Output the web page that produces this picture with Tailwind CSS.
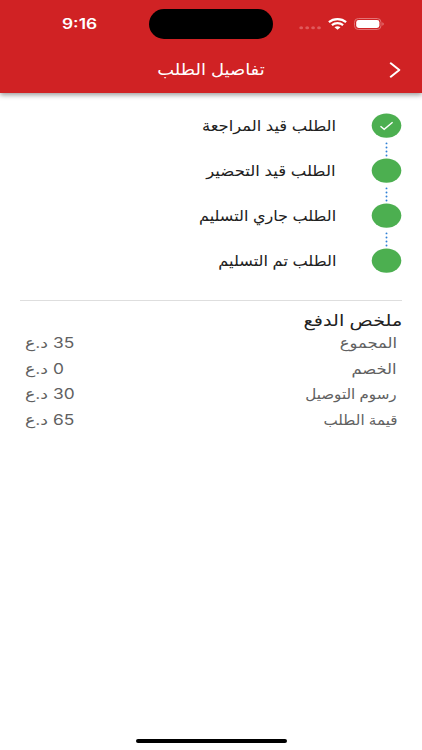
<!DOCTYPE html>
<html lang="ar" dir="rtl">
<head>
  <meta charset="UTF-8">
  <meta name="viewport" content="width=device-width, initial-scale=1.0">
  <title>تفاصيل الطلب</title>
  <script src="https://cdn.jsdelivr.net/npm/@tailwindcss/browser@4"></script>
</head>
<body class="bg-white font-['Inter','DejaVu_Sans',sans-serif] text-[#212121]">
  <div class="h-[750px] flex flex-col overflow-hidden">
    <header class="h-[93px] shrink-0 bg-[#d02224] text-white shadow-[0_2px_5px_rgba(0,0,0,0.4)]">
      <!-- Status bar -->
      <div dir="ltr" class="h-12 grid grid-cols-[149px_124px_149px] items-center">
        <span class="pl-[62px] text-[14px] leading-none font-semibold"><span class="inline-block origin-left scale-x-[1.24]">9:16</span></span>
        <div class="h-[30px] rounded-full bg-black"></div>
        <div class="flex items-center pl-[26px] pb-px">
          <svg class="w-[22px] h-3 mr-[7px]" viewBox="0 0 22 12" fill="#e05a5c">
            <ellipse cx="2.2" cy="9.8" rx="1.9" ry="1.5"/>
            <ellipse cx="8.2" cy="9.8" rx="1.9" ry="1.5"/>
            <ellipse cx="14.1" cy="9.8" rx="1.9" ry="1.5"/>
            <ellipse cx="20" cy="9.8" rx="1.9" ry="1.5"/>
          </svg>
          <svg class="w-[19px] h-3 mr-[7px]" viewBox="0 0 19 12" fill="none" stroke="#fff" stroke-width="2.2">
            <path d="M.9 4.2C5.6 .1 13.4 .1 18.1 4.2"/>
            <path d="M3.9 7.1C7 4.5 12 4.5 15.1 7.1"/>
            <path d="M9.5 11.8L6.5 9.3C8.2 7.9 10.8 7.9 12.5 9.3Z" fill="#fff" stroke="none"/>
          </svg>
          <svg class="w-[31px] h-3" viewBox="0 0 31 12">
            <rect x=".5" y=".5" width="26.5" height="11" rx="3.8" fill="none" stroke="#e37375"/>
            <rect x="2.2" y="2" width="23.2" height="8" rx="2.4" fill="#fff"/>
            <path d="M28.3 4.2C30.3 4.8 30.3 7.2 28.3 7.8Z" fill="#e37375"/>
          </svg>
        </div>
      </div>
      <!-- App bar -->
      <div class="h-[45px] grid grid-cols-[60px_1fr_60px] items-center">
        <svg class="w-3 h-4 mr-[21px] -mt-px" viewBox="0 0 12 16" fill="none" stroke="#fff" stroke-width="2" stroke-linecap="round" stroke-linejoin="round">
          <path d="M1.8 1.3L10.3 8L1.8 14.7"/>
        </svg>
        <h1 class="-mt-[3px] text-center text-[16px] leading-6 whitespace-nowrap"><span class="inline-block scale-x-[1.12]">تفاصيل الطلب</span></h1>
      </div>
    </header>

    <main class="px-5">
      <!-- Order progress -->
      <ol class="pt-5">
        <li class="h-[45px] flex items-start">
          <div class="w-[31px] flex flex-col items-center">
            <svg class="w-[31px] h-[25px]" viewBox="0 0 31 25">
              <ellipse cx="15.5" cy="12.6" rx="14.8" ry="12.2" fill="#4caf50"/>
              <path d="M9.5 13.3L13.2 16.4L21.6 9.3" fill="none" stroke="#fff" stroke-width="1.4"/>
            </svg>
            <svg class="w-[3px] h-[15px] mt-1" viewBox="0 0 3 15" fill="#2f80d6">
              <circle cx="1.5" cy="1.4" r=".95"/><circle cx="1.5" cy="5.5" r=".95"/><circle cx="1.5" cy="9.5" r=".95"/><circle cx="1.5" cy="13.5" r=".95"/>
            </svg>
          </div>
          <p class="mr-[35px] h-[25px] text-[15px] leading-[25px] whitespace-nowrap"><span class="inline-block origin-right scale-x-[1.09]">الطلب قيد المراجعة</span></p>
        </li>
        <li class="h-[45px] flex items-start">
          <div class="w-[31px] flex flex-col items-center">
            <svg class="w-[31px] h-[25px]" viewBox="0 0 31 25">
              <ellipse cx="15.5" cy="12.6" rx="14.8" ry="12.2" fill="#4caf50"/>
            </svg>
            <svg class="w-[3px] h-[15px] mt-1" viewBox="0 0 3 15" fill="#2f80d6">
              <circle cx="1.5" cy="1.4" r=".95"/><circle cx="1.5" cy="5.5" r=".95"/><circle cx="1.5" cy="9.5" r=".95"/><circle cx="1.5" cy="13.5" r=".95"/>
            </svg>
          </div>
          <p class="mr-[35px] h-[25px] text-[15px] leading-[25px] whitespace-nowrap"><span class="inline-block origin-right scale-x-[1.1]">الطلب قيد التحضير</span></p>
        </li>
        <li class="h-[45px] flex items-start">
          <div class="w-[31px] flex flex-col items-center">
            <svg class="w-[31px] h-[25px]" viewBox="0 0 31 25">
              <ellipse cx="15.5" cy="12.6" rx="14.8" ry="12.2" fill="#4caf50"/>
            </svg>
            <svg class="w-[3px] h-[15px] mt-1" viewBox="0 0 3 15" fill="#2f80d6">
              <circle cx="1.5" cy="1.4" r=".95"/><circle cx="1.5" cy="5.5" r=".95"/><circle cx="1.5" cy="9.5" r=".95"/><circle cx="1.5" cy="13.5" r=".95"/>
            </svg>
          </div>
          <p class="mr-[35px] h-[25px] text-[15px] leading-[25px] whitespace-nowrap"><span class="inline-block origin-right scale-x-[1.07]">الطلب جاري التسليم</span></p>
        </li>
        <li class="h-[45px] flex items-start">
          <div class="w-[31px] flex flex-col items-center">
            <svg class="w-[31px] h-[25px]" viewBox="0 0 31 25">
              <ellipse cx="15.5" cy="12.6" rx="14.8" ry="12.2" fill="#4caf50"/>
            </svg>
          </div>
          <p class="mr-[35px] h-[25px] text-[15px] leading-[25px] whitespace-nowrap"><span class="inline-block origin-right scale-x-[1.08]">الطلب تم التسليم</span></p>
        </li>
      </ol>

      <!-- Payment summary -->
      <section class="mt-[7px] border-t border-[#dedede] pt-2">
        <h2 class="h-[21px] text-[16px] leading-[22px]"><span class="inline-block origin-right scale-x-[1.2]">ملخص الدفع</span></h2>
        <dl class="px-[5px] text-[14px] leading-[25px] text-[#616161]">
          <div class="h-[25.7px] flex justify-between">
            <dt><span class="inline-block origin-right scale-x-[1.17]">المجموع</span></dt>
            <dd><span class="inline-block origin-left scale-x-[1.24]">35 د.ع</span></dd>
          </div>
          <div class="h-[25.7px] flex justify-between">
            <dt><span class="inline-block origin-right scale-x-[1.17]">الخصم</span></dt>
            <dd><span class="inline-block origin-left scale-x-[1.24]">0 د.ع</span></dd>
          </div>
          <div class="h-[25.7px] flex justify-between">
            <dt><span class="inline-block origin-right scale-x-[1.08]">رسوم التوصيل</span></dt>
            <dd><span class="inline-block origin-left scale-x-[1.24]">30 د.ع</span></dd>
          </div>
          <div class="h-[25.7px] flex justify-between">
            <dt><span class="inline-block origin-right scale-x-[1.08]">قيمة الطلب</span></dt>
            <dd><span class="inline-block origin-left scale-x-[1.24]">65 د.ع</span></dd>
          </div>
        </dl>
      </section>
    </main>

    <!-- Home indicator -->
    <div class="mt-auto mb-[7px] mx-auto w-[151px] h-1 rounded-full bg-black"></div>
  </div>
</body>
</html>
